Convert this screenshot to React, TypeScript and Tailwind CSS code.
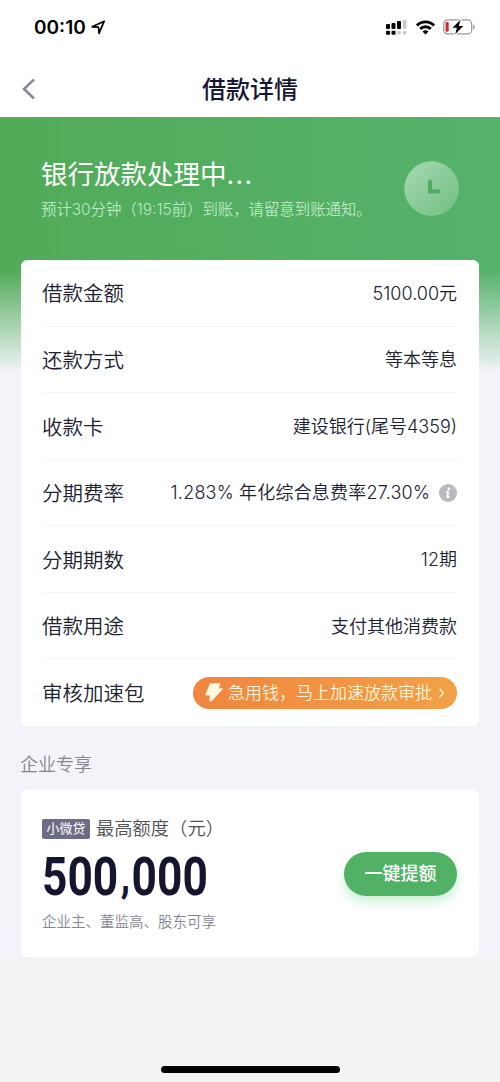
import type { ReactNode } from 'react'

const details: { label: string; value: ReactNode }[] = [
  { label: '借款金额', value: '5100.00元' },
  { label: '还款方式', value: '等本等息' },
  { label: '收款卡', value: '建设银行(尾号4359)' },
  {
    label: '分期费率',
    value: (
      <>
        <span className="tracking-[0.2px]">1.283% 年化综合息费率27.30%</span>
        <InfoIcon />
      </>
    ),
  },
  { label: '分期期数', value: '12期' },
  { label: '借款用途', value: '支付其他消费款' },
  { label: '审核加速包', value: <SpeedUpButton /> },
]

function InfoIcon() {
  return (
    <svg className="ml-[9px] h-[18px] w-[18px]" viewBox="0 0 18 18">
      <circle cx="9" cy="9" r="9" fill="#b9b9c0" />
      <circle cx="9.9" cy="4.9" r="1.4" fill="#fff" />
      <path d="M7.2 8h2l-.9 5h2" fill="none" stroke="#fff" strokeWidth="1.9" strokeLinejoin="round" />
    </svg>
  )
}

function SpeedUpButton() {
  return (
    <button className="-mt-[2px] flex h-8 w-[264px] items-center rounded-full bg-linear-to-r from-[#f0853f] to-[#f2a146] pl-3 text-[17px] text-[#fff3d6]">
      <svg className="mr-[5px] h-[19px] w-[18px] shrink-0" viewBox="0 0 18 19">
        <path
          d="M5.5 1H14.5L12.8 6H17L6 17.800 4.800 17.500 6 11.800H1.200Z"
          fill="#fff7df"
          stroke="#fff7df"
          strokeWidth="1.6"
          strokeLinejoin="round"
        />
      </svg>
      <span className="pt-px font-[350] whitespace-nowrap">急用钱，马上加速放款审批</span>
      <svg className="ml-[6px] h-[10px] w-[7px] shrink-0" viewBox="0 0 7 10">
        <path d="M1.5.8 5.5 5 1.5 9.2" fill="none" stroke="#fff3d6" strokeWidth="1.4" />
      </svg>
    </button>
  )
}

function StatusBar() {
  return (
    <div className="flex h-[54px] items-center pr-[25px] pl-[34px] text-black">
      <span className="pt-[2px] text-[19px] font-semibold">00:10</span>
      <svg className="ml-[5px] h-[15px] w-[15px]" viewBox="0 0 15 15">
        <path d="M1.2 6.8 13.2 1.2 8 13.3 7.5 7.2Z" fill="none" stroke="#000" strokeWidth="1.7" strokeLinejoin="round" />
      </svg>

      <svg className="ml-auto h-[15px] w-[21px]" viewBox="0 0 21 15">
        <rect x="0" y="4" width="4" height="5" rx="1" />
        <rect x="5.5" y="3" width="4" height="6" rx="1" />
        <rect x="11" y="1" width="4" height="8" rx="1" />
        <rect x="16.8" y="0" width="3.7" height="9" rx="1" fill="#c9c9c9" />
        <rect x="0" y="10.8" width="4" height="4" rx="1" />
        <rect x="5.5" y="10.8" width="4" height="4" rx="1" />
        <rect x="11.3" y="11" width="3.5" height="3.5" rx="1" fill="#c9c9c9" />
        <rect x="16.8" y="11" width="3.5" height="3.5" rx="1" fill="#c9c9c9" />
      </svg>
      <svg className="ml-[9px] h-[15px] w-[19px]" viewBox="0 0 19 15">
        <g fill="none" stroke="#000" strokeWidth="2.9">
          <path d="M1 5.4a12 12 0 0 1 17 0" />
          <path d="M4.2 8.9a7.5 7.5 0 0 1 10.6 0" />
        </g>
        <path d="M6.5 11.5a4.2 4.2 0 0 1 6 0l-3 3.1Z" />
      </svg>
      <svg className="ml-2 h-4 w-8" viewBox="0 0 32 16">
        <rect x=".7" y=".9" width="28" height="14" rx="4" fill="none" stroke="#999" strokeWidth="1.2" />
        <rect x="2.5" y="3" width="3.2" height="9.8" rx="1" fill="#cf2f2f" />
        <path d="M30.3 5.5v5c1.6-.6 1.6-4.4 0-5Z" fill="#777" />
        <path d="M17.5.8 9.5 8.8h4.4L12.2 15.2 20.3 6.9h-4.5Z" stroke="#fff" strokeWidth="2" paintOrder="stroke" />
      </svg>
    </div>
  )
}

function ClockIcon() {
  return (
    <svg className="h-[55px] w-[55px]" viewBox="0 0 55 55">
      <defs>
        <linearGradient id="clock" x1="0" y1="0" x2="1" y2="1">
          <stop offset="0" stopColor="#a8d9b2" />
          <stop offset="1" stopColor="#70be82" />
        </linearGradient>
      </defs>
      <circle cx="27.5" cy="27.5" r="27" fill="url(#clock)" stroke="#8fd09e" strokeWidth=".6" />
      <path d="M26 20.5v10h8.5" fill="none" stroke="#4fac62" strokeWidth="4" strokeLinecap="round" />
    </svg>
  )
}

export default function App() {
  return (
    <div className="flex h-[1082px] w-[500px] flex-col overflow-hidden bg-[#f3f3f3] font-['Inter','Noto_Sans_CJK_SC',sans-serif] text-[#20202f]">
      <header className="h-[117px] shrink-0 bg-white">
        <StatusBar />
        <div className="grid h-[69px] grid-cols-[1fr_auto_1fr] items-center px-[22px]">
          <svg className="h-[22px] w-[14px]" viewBox="0 0 14 22">
            <path d="M12 1.5 2 11l10 9.5" fill="none" stroke="#8a8a94" strokeWidth="2.6" />
          </svg>
          <h1 className="pt-[2px] text-2xl font-medium text-[#171733]">借款详情</h1>
        </div>
      </header>

      {/* Green banner fades into the page colour behind the card */}
      <main className="h-[840px] shrink-0 bg-[linear-gradient(to_bottom,transparent_153px,#f3f4f9_256px),linear-gradient(to_right,#51ab58,#55b26b)] px-[21px]">
        <section className="flex h-[143px] items-center justify-between px-5">
          <div className="whitespace-nowrap">
            <h2 className="text-[26.5px] leading-9 text-white">
              银行放款处理中<span className="tracking-[1.4px]">...</span>
            </h2>
            <p className="mt-[6px] text-[15.4px] leading-6 font-[350] text-[#bbe8c4]">
              预计30分钟（19:15前）到账，请留意到账通知。
            </p>
          </div>
          <ClockIcon />
        </section>

        <section className="grid h-[466px] grid-rows-7 rounded-md bg-white pr-[22px] pl-[21px]">
          {details.map((item) => (
            <div key={item.label} className="flex items-center justify-between border-b border-[#f5f5f7] last:border-0">
              <span className="pt-1 text-[20.5px] font-[350]">{item.label}</span>
              <span className="flex items-center pt-[2px] text-lg font-[350] whitespace-nowrap">{item.value}</span>
            </div>
          ))}
        </section>

        <h3 className="-ml-px flex h-16 items-center pt-[13px] text-lg font-[350] text-[#85858f]">企业专享</h3>

        <section className="flex h-[167px] items-center justify-between rounded-md bg-white pr-[22px] pl-[21px]">
          <div className="flex h-[116px] flex-col justify-between pt-[2px]">
            <div className="flex h-[22px] items-center whitespace-nowrap">
              <span className="flex h-5 w-12 items-center justify-center rounded-xs bg-[#6d6b86] text-[13px] text-white">小微贷</span>
              <span className="ml-[6px] text-[18.3px] font-[350] text-[#505055]">最高额度（元）</span>
            </div>
            <strong className="flex h-[54px] w-fit origin-left scale-x-[0.82] font-['Roboto'] text-[54px] leading-[55px] font-bold text-[#15152f]">
              500
              <span className="pr-[2px] pl-[3px] text-[46px] leading-[55px]">,</span>
              000
            </strong>
            <p className="text-[14.5px] leading-5 font-[350] text-[#85858f]">企业主、董监高、股东可享</p>
          </div>
          <button className="h-11 w-[113px] rounded-full bg-[#51b265] pt-px text-lg font-medium text-white shadow-[0_6px_12px_#c9f0d5]">
            一键提额
          </button>
        </section>
      </main>

      <div className="mx-auto mt-auto mb-[9px] h-[7px] w-[179px] shrink-0 rounded-full bg-black" />
    </div>
  )
}
